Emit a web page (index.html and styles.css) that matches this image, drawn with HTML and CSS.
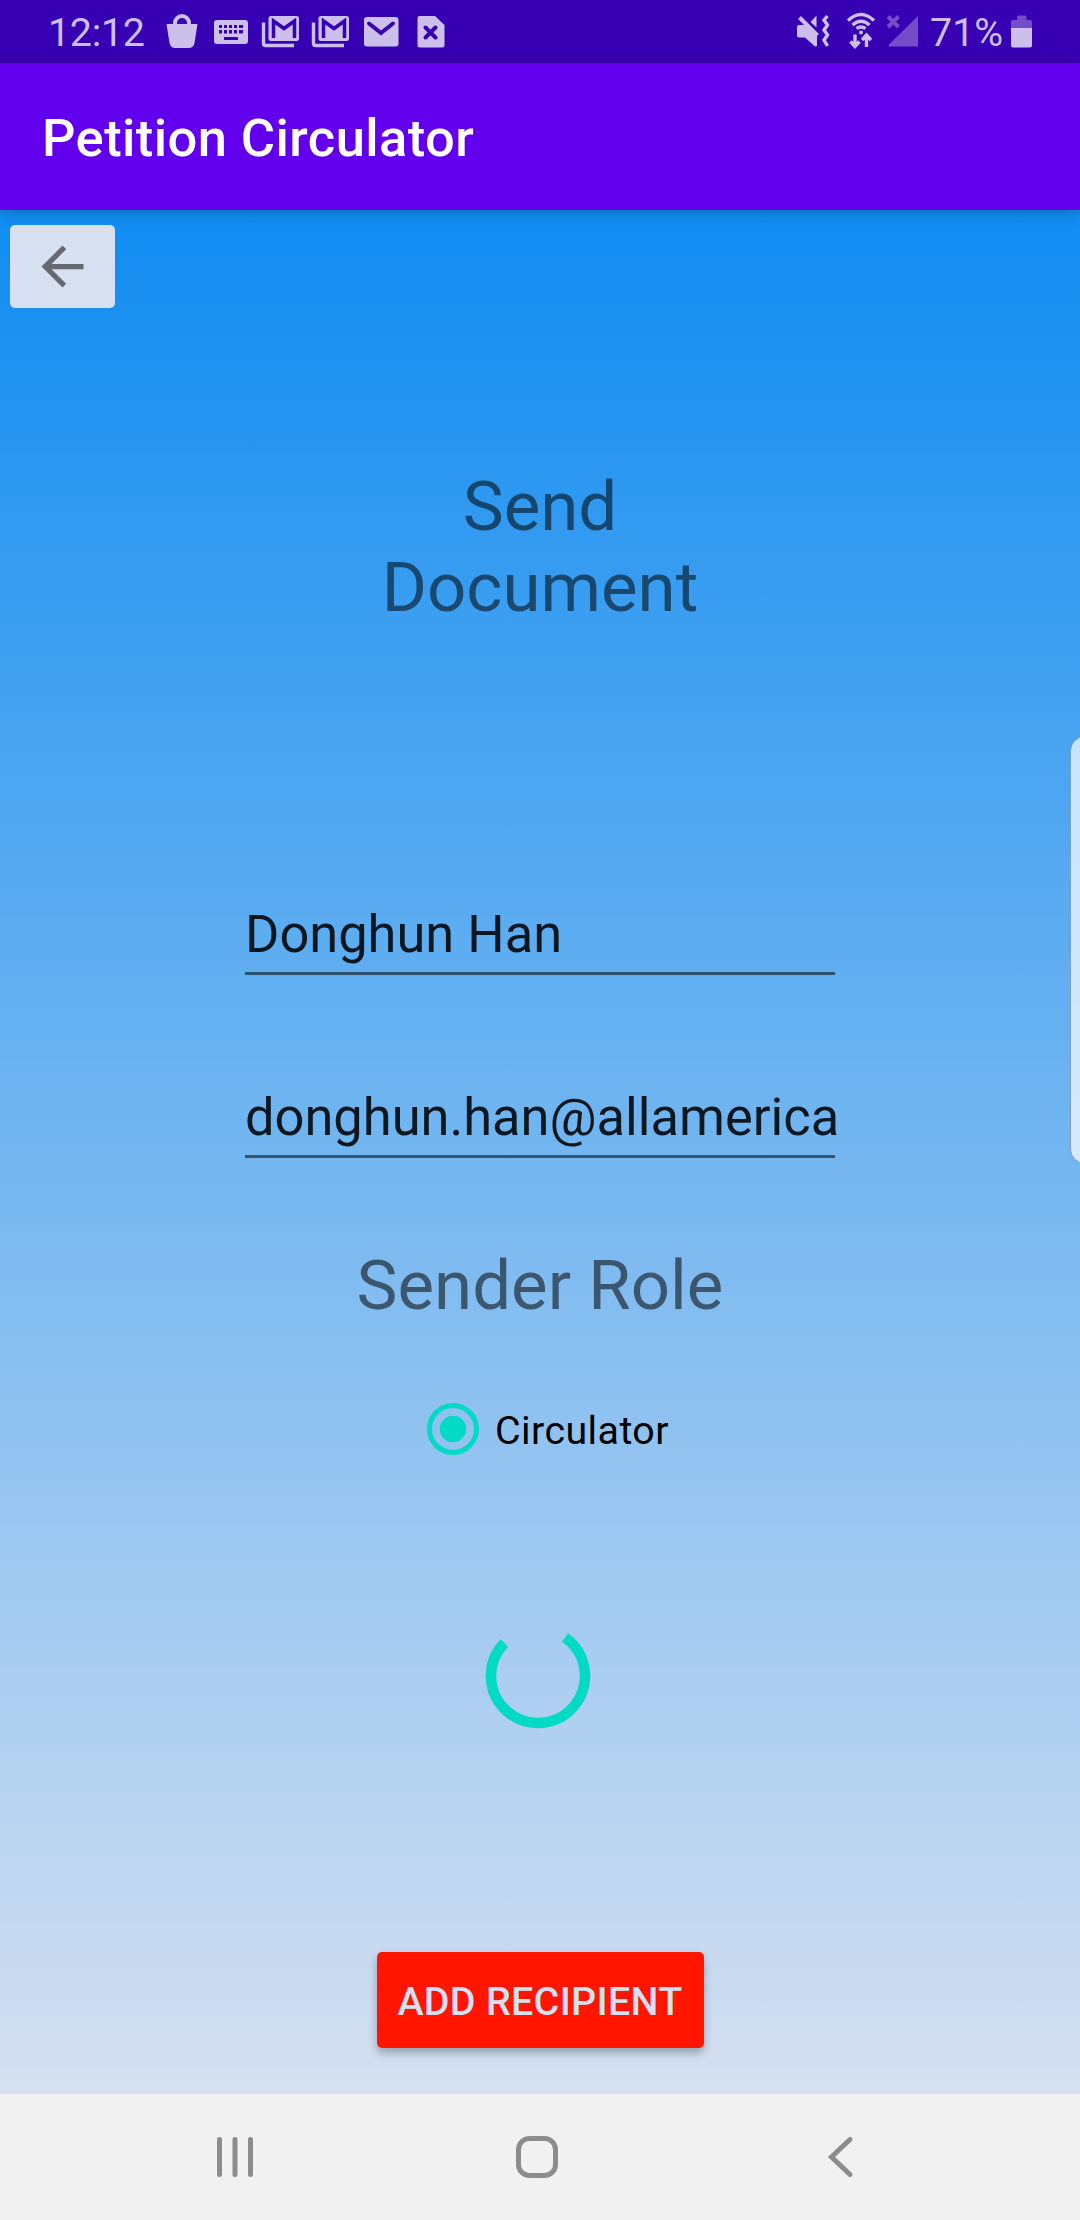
FILE: index.html
```html
<!DOCTYPE html>
<html lang="en">
  <head>
    <meta charset="utf-8" />
    <title>Petition Circulator</title>
    <meta name="viewport" content="width=device-width, initial-scale=1.0" />
    <link rel="stylesheet" href="styles.css">
  </head>
  <body>
    <div class="status">
      <span class="clock">12:12</span>
      <svg class="notifications" width="290" height="63" viewBox="160 0 290 63">
        <path d="M166.500 24h31l-3 19q-.8 5-6 5h-13q-5.200 0-6-5z" />
        <path class="line" d="M175 25v-2a7 7 0 0 1 14 0v2" />
        <path fill-rule="evenodd" d="M217 20h28q3 0 3 3v18q0 3-3 3h-28q-3 0-3-3v-18q0-3 3-3zm2 5v3h3v-3zm5 0v3h3v-3zm5 0v3h3v-3zm5 0v3h3v-3zm5 0v3h4v-3zm-20 5v3.500h3v-3.500zm5 0v3.500h3v-3.500zm5 0v3.500h3v-3.500zm5 0v3.500h3v-3.500zm5 0v3.500h4v-3.500zm-15 7v3h14v-3z" />
        <g id="gmail">
          <rect x="268.500" y="16" width="30.500" height="25" rx="2.500" />
          <path class="cut" d="M273.500 38V21l10.500 7.500L294.500 21v17" />
          <path class="line thin" d="M263.500 22.500v21q0 2 2 2h28.500" />
        </g>
        <use href="#gmail" x="50" />
        <rect x="364" y="17" width="34.500" height="29.500" rx="3" />
        <path class="cut round" d="M369 23.500l12 9.500 12-9.500" />
        <path d="M419 16h16l9.500 9v20q0 2.500-2.500 2.500h-22q-2.500 0-2.500-2.500v-26.500q0-2.500 1.500-2.500z" />
        <path class="cut round" d="M425.500 27.500l10 10m0-10l-10 10" />
      </svg>
      <svg class="system" width="130" height="63" viewBox="794 0 130 63">
        <path d="M799 25h7l11 11v10l-2 .5-10-9h-6q-2 0-2-2v-8.500q0-2 2-2zM810.500 22l6-6.500v12z" />
        <path class="line" d="M799.500 17.500l18 18" />
        <path class="line thin" d="M827.500 16l-3.500 4 3.500 5-3.500 5 3.500 5-3.500 5 3.500 6" />
        <path class="line thin" d="M848 20.500q13-12 26 0M852.500 25q8.500-7.500 17 0M856.500 28.500q4.500-3 9 0" />
        <circle cx="861" cy="32.500" r="2" />
        <path class="line thin" d="M855 34.500v12M850.500 41.500l4.500 5 4.500-5M866.500 47v-12M862 40l4.500-5 4.500 5" />
        <g class="dim">
          <path d="M918 16v30.500h-29q-1-1 0-2z" />
          <path class="line" d="M888 16.500l10.500 10.500m0-10.500l-10.500 10.500" />
        </g>
      </svg>
      <span class="percent">71%</span>
      <svg class="battery" width="21" height="63" viewBox="1011 0 21 63">
        <path class="dim" d="M1011 28v-6q0-2 2-2h4v-3q0-1.500 1.500-1.500h6.500q1.500 0 1.500 1.500v3h3.500q2 0 2 2v6z" />
        <path d="M1011 28h21v17.500q0 2-2 2h-17q-2 0-2-2z" />
      </svg>
    </div>
    <header>
      <h1>Petition Circulator</h1>
    </header>
    <main>
      <button class="back" aria-label="Back">
        <svg width="63" height="63" viewBox="0 0 24 24"><path d="M20 11H7.830l5.590-5.590L12 4l-8 8 8 8 1.410-1.410L7.830 13H20z" /></svg>
      </button>
      <h2>Send<br>Document</h2>
      <div class="field name">Donghun Han</div>
      <div class="field email">donghun.han@allamerica</div>
      <h2 class="role">Sender Role</h2>
      <div class="option"><span class="radio"></span><span class="label">Circulator</span></div>
      <svg class="spinner" width="106" height="106" viewBox="-53 -53 106 106">
        <path d="M27-38.500A47 47 0 1 1-33.500-33" />
      </svg>
      <button class="add">ADD RECIPIENT</button>
      <div class="edge"></div>
    </main>
    <nav>
      <svg width="40" height="44" viewBox="0 0 40 44"><path d="M4.500 4.500v35M20 4.500v35M35.500 4.500v35" /></svg>
      <svg class="home" width="44" height="44" viewBox="0 0 44 44"><rect x="3.500" y="3.500" width="37" height="37" rx="11" /></svg>
      <svg width="28" height="44" viewBox="0 0 28 44"><path d="M23 4.500L4.500 22 23 39.500" /></svg>
    </nav>
  </body>
</html>
```
FILE: styles.css
```css
body {
  margin: 0;
  width: 1080px;
  height: 2220px;
  display: flex;
  flex-direction: column;
  overflow: hidden;
  font-family: Roboto, sans-serif;
}

.status {
  height: 63px;
  display: flex;
  flex-shrink: 0;
  background: #3700b3;
  color: #cdbfec;
  font-size: 39.4px;
  line-height: 66px;
}
.status svg {
  fill: #cdbfec;
}
.clock {
  width: 112px;
  padding-left: 48px;
  letter-spacing: -0.3px;
}
.system {
  margin-left: 344px;
}
.percent {
  width: 81px;
  padding-left: 6px;
}
.status .line {
  fill: none;
  stroke: #cdbfec;
  stroke-width: 4;
}
.status .thin {
  stroke-width: 3.4;
}
.status .cut {
  fill: none;
  stroke: #3700b3;
  stroke-width: 3.5;
}
.status .round {
  stroke-width: 4;
  stroke-linecap: round;
}
.status .dim {
  opacity: 0.4;
}

header {
  height: 147px;
  flex-shrink: 0;
  display: flex;
  align-items: center;
  background: #6200ee;
  position: relative;
  box-shadow: 0 2px 14px rgba(0, 0, 0, 0.22);
  z-index: 1;
}
h1 {
  margin: 3px 0 0 42px;
  color: white;
  font-size: 52.5px;
  font-weight: 500;
  letter-spacing: 0.42px;
}

main {
  height: 1884px;
  flex-shrink: 0;
  display: flex;
  flex-direction: column;
  align-items: center;
  position: relative;
  background: linear-gradient(#108cf1, #d6e0f0);
}
button {
  border: 0;
  padding: 0;
  border-radius: 5px;
  font-family: inherit;
}
.back {
  width: 105px;
  height: 83px;
  margin: 15px 0 0 10px;
  align-self: flex-start;
  display: flex;
  align-items: center;
  justify-content: center;
  background: #d6e0f0;
}
.back path {
  fill: #666a70;
}
h2 {
  margin: 158px 0 0;
  color: rgba(0, 0, 0, 0.54);
  font-size: 69px;
  font-weight: 400;
  line-height: 81px;
  text-align: center;
}
.field {
  width: 590px;
  height: 72px;
  box-sizing: border-box;
  border-bottom: 3px solid rgba(0, 0, 0, 0.54);
  color: rgba(0, 0, 0, 0.87);
  font-size: 52.4px;
  line-height: 62px;
  white-space: nowrap;
}
.name {
  margin-top: 275px;
}
.email {
  margin-top: 111px;
}
.role {
  margin-top: 87px;
}
.option {
  margin: 77px 0 0 16px;
  height: 52px;
  display: flex;
  align-items: center;
  gap: 16px;
  color: black;
  font-size: 39.4px;
  letter-spacing: 0.4px;
}
.label {
  padding-top: 3px;
}
.radio {
  width: 52px;
  height: 52px;
  box-sizing: border-box;
  border: 5px solid #03dac5;
  border-radius: 50%;
  background: radial-gradient(circle, #03dac5 13px, transparent 13.5px);
}
.spinner {
  margin: 168px 4px 0 0;
}
.spinner path {
  fill: none;
  stroke: #03dac5;
  stroke-width: 10.5;
}
.add {
  width: 327px;
  height: 96px;
  margin-top: 223px;
  padding-top: 2px;
  background: #ff1500;
  color: #d6e0f0;
  font-size: 39.4px;
  font-weight: 500;
  letter-spacing: 0.3px;
  box-shadow: 0 5px 8px rgba(0, 0, 0, 0.28);
}
/* edge panel handle, runs off the right side */
.edge {
  position: absolute;
  top: 526px;
  right: -20px;
  width: 28px;
  height: 426px;
  border: 1px solid #7f9cb8;
  border-radius: 16px;
  background: rgba(255, 255, 255, 0.7);
}

nav {
  height: 126px;
  flex-shrink: 0;
  display: flex;
  align-items: center;
  justify-content: space-between;
  box-sizing: border-box;
  padding: 0 225px 0 215px;
  background: #f1f1f1;
}
nav svg {
  fill: none;
  stroke: #8c8c8c;
  stroke-width: 5;
  stroke-linecap: round;
}
.home {
  margin-left: -8px;
}
```
